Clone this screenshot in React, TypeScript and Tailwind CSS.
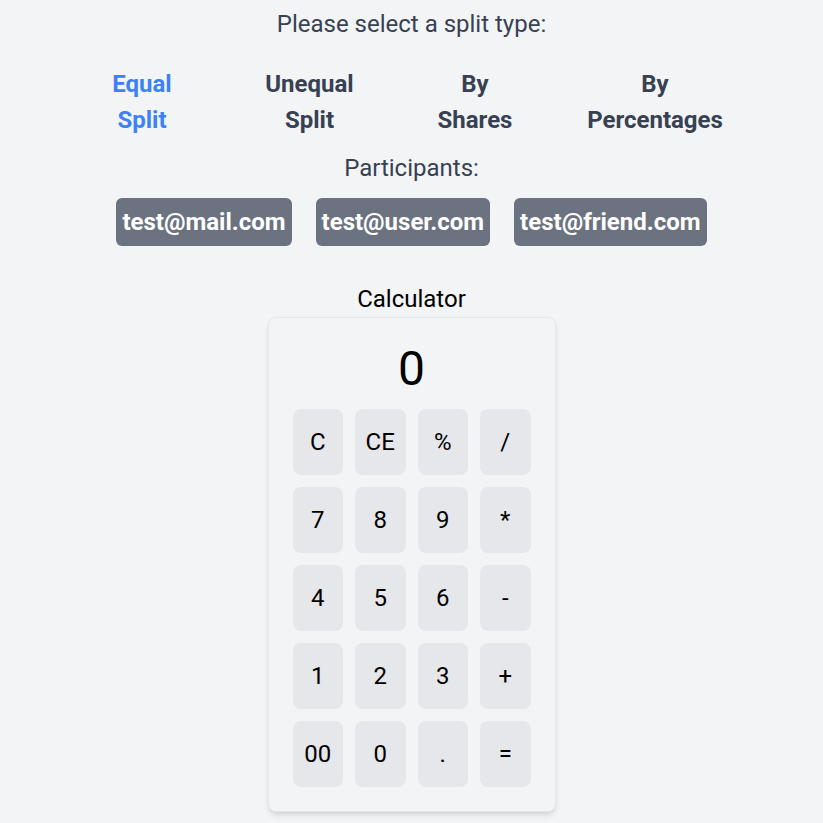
import React from "react";

const splitTypes = [
  { lines: ["Equal", "Split"], w: "w-[156px]", active: true },
  { lines: ["Unequal", "Split"], w: "w-[179px]", active: false },
  { lines: ["By", "Shares"], w: "w-[152px]", active: false },
  { lines: ["By", "Percentages"], w: "w-[208px]", active: false },
];

const participants = ["test@mail.com", "test@user.com", "test@friend.com"];

const keys = ["C", "CE", "%", "/", "7", "8", "9", "*", "4", "5", "6", "-", "1", "2", "3", "+", "00", "0", ".", "="];

export default function App() {
  return (
    <div className="min-h-screen bg-[#f3f4f6] flex flex-col items-center font-['Roboto',sans-serif]">
      <p className="mt-[8px] text-2xl text-[#374151]">Please select a split type:</p>

      <div className="mt-[26px] flex">
        {splitTypes.map((s) => (
          <button
            key={s.lines.join(" ")}
            className={`${s.w} text-2xl leading-9 font-bold text-center ${s.active ? "text-[#3b82f6]" : "text-[#374151]"}`}
          >
            {s.lines.map((l) => (
              <span key={l} className="block">
                {l}
              </span>
            ))}
          </button>
        ))}
      </div>

      <p className="mt-[14px] text-2xl text-[#374151]">Participants:</p>

      <div className="mt-[14px] flex gap-6">
        {participants.map((p) => (
          <span key={p} className="rounded-md bg-[#6b7280] px-1.5 py-2 text-2xl font-bold text-white">
            {p}
          </span>
        ))}
      </div>

      <p className="mt-[37px] text-2xl text-black">Calculator</p>

      <div className="mt-[2px] w-72 rounded-lg border border-[#e5e7eb] bg-[#f3f4f6] p-6 shadow-md">
        <div className="mt-[3px] mb-4 text-center text-5xl leading-none text-black">0</div>
        <div className="grid grid-cols-4 gap-3">
          {keys.map((k) => (
            <button key={k} className="h-[66px] rounded-lg bg-[#e5e7eb] text-2xl text-black">
              {k}
            </button>
          ))}
        </div>
      </div>
    </div>
  );
}
